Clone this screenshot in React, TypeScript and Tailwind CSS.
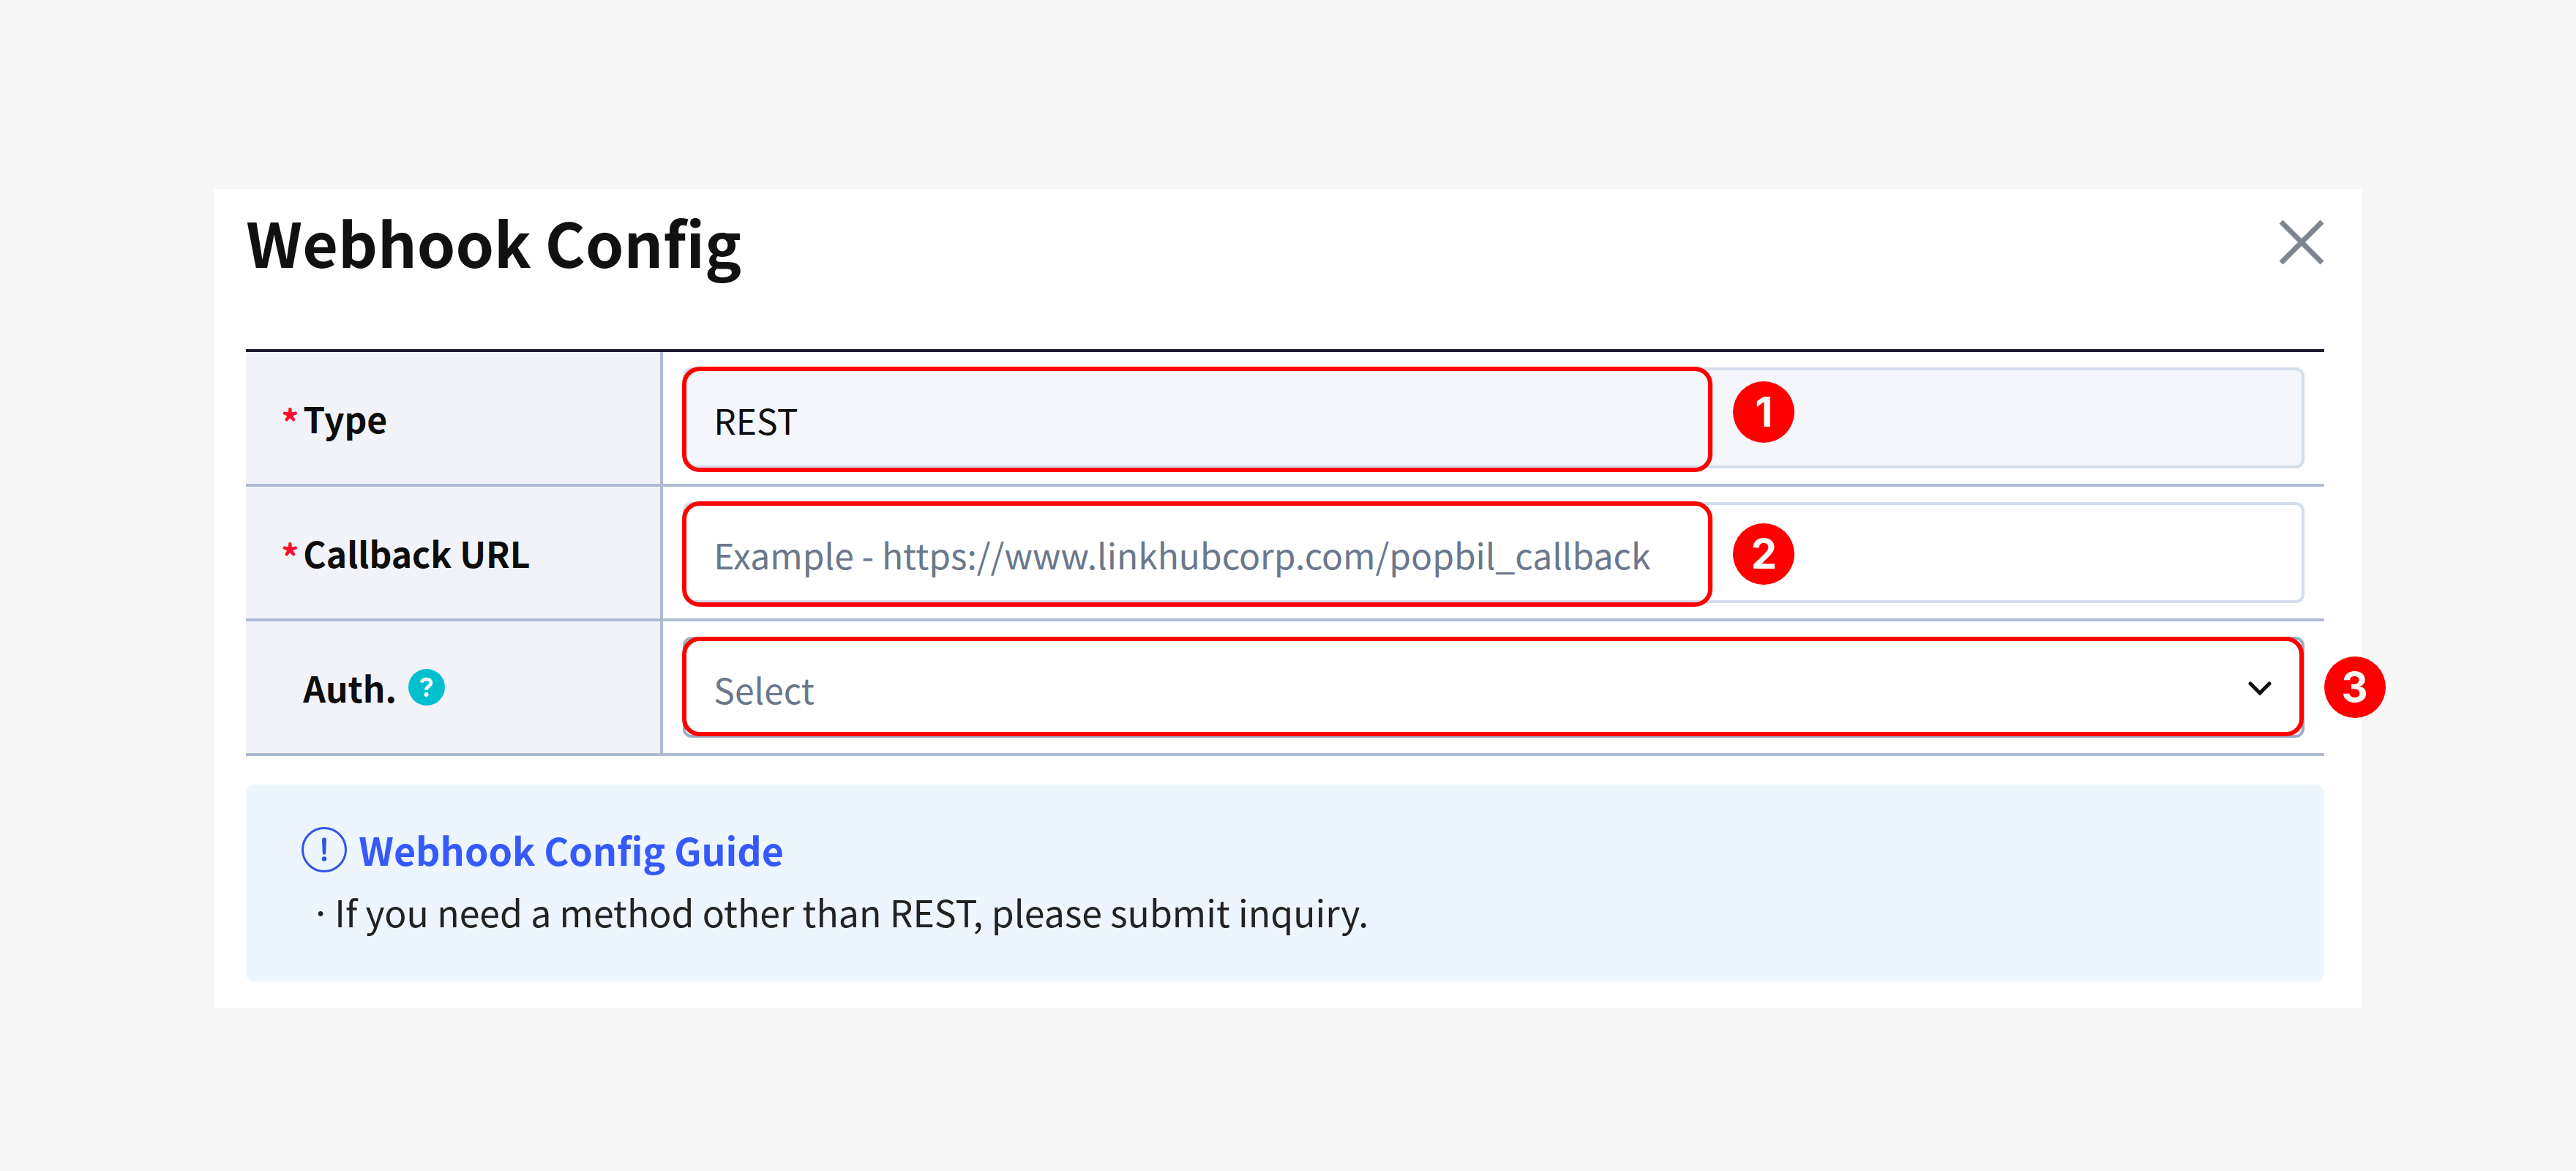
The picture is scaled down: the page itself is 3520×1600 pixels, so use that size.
import React, { useState } from 'react';
import clsx from 'clsx';

interface CalloutProps {
  step: number;
  className: string;
  badgeClassName: string;
}

// Red outline with a numbered badge to its right
const Callout: React.FC<CalloutProps> = ({ step, className, badgeClassName }) => (
  <div className={clsx('absolute -left-px border-6 border-[#ff0000] rounded-3xl pointer-events-none', className)}>
    <span
      className={clsx(
        'absolute left-full ml-[34px] size-21 rounded-full bg-[#ff0000] text-[#fafafa] flex items-center justify-center font-[Inter,sans-serif] font-bold text-[56px] leading-none',
        badgeClassName
      )}
    >
      {step}
    </span>
  </div>
);

interface RowProps {
  id: string;
  label: string;
  required?: boolean;
  help?: boolean;
  children: React.ReactNode;
}

const Row: React.FC<RowProps> = ({ id, label, required, help, children }) => (
  <tr>
    <th
      scope="row"
      className="w-[570px] bg-[#f2f3f8] border-b-4 border-r-4 border-[#aebbd2] pl-12 text-left font-bold align-middle"
    >
      <div className="flex items-center">
        <span aria-hidden="true" className="w-[30px] pt-2 text-[#ff0a2f]">
          {required && '*'}
        </span>
        <label htmlFor={id} className="text-[#0d0d0d]">
          {label}
        </label>
        {help && (
          <button type="button" aria-label="Auth. help" className="ml-4 size-[50px] cursor-pointer">
            <svg viewBox="0 0 50 50" className="size-full" fill="none">
              <circle cx="25" cy="25" r="25" fill="#00bfcf" />
              <path
                d="M18 18.500c1-3.300 3.400-4.500 6.500-4.500 4 0 6.500 2 6.500 5 0 4.500-6.500 4.800-6.500 10"
                stroke="#fff"
                strokeWidth="4.500"
              />
              <circle cx="24.500" cy="35" r="3" fill="#fff" />
            </svg>
          </button>
        )}
      </div>
    </th>
    <td className="border-b-4 border-[#aebbd2] px-[27px] py-[21px]">
      <div className="relative">{children}</div>
    </td>
  </tr>
);

export default function App() {
  const [url, setUrl] = useState('');
  const [auth, setAuth] = useState('');

  return (
    <div className="min-h-screen bg-[#f7f7f7] pt-[258px] pb-56 font-['Noto_Sans_CJK_KR',sans-serif] text-[48px] leading-[72px]">
      <main className="w-5/6 mx-auto bg-white pl-[43px] pr-[51px] pb-9">
        <header className="h-[219px] pt-[42px] flex items-start justify-between">
          <h1 className="text-[84px] leading-[60px] font-bold text-[#111]">Webhook Config</h1>
          <button type="button" aria-label="Close" className="cursor-pointer">
            <svg viewBox="0 0 62 62" className="size-[62px]" stroke="#80868f" strokeWidth="7">
              <path d="M3 3l56 56M59 3L3 59" />
            </svg>
          </button>
        </header>

        <table className="w-full border-separate border-spacing-0 border-t-4 border-[#1c1d2c]">
          <tbody>
            <Row id="type" label="Type" required>
              <input
                id="type"
                readOnly
                value="REST"
                className="block w-full h-[138px] px-[38px] pt-1 rounded-xl border-4 border-[#d3ddeb] bg-[#f5f6fb] text-[#0d0d0d] outline-none"
              />
              <Callout step={1} className="-top-px h-36 w-[1408px]" badgeClassName="top-[14px]" />
            </Row>
            <Row id="callback" label="Callback URL" required>
              <input
                id="callback"
                type="text"
                value={url}
                onChange={(e) => setUrl(e.target.value)}
                placeholder="Example - https://www.linkhubcorp.com/popbil_callback"
                className="block w-full h-[138px] px-[38px] pt-1 rounded-xl border-4 border-[#d3ddeb] bg-white placeholder:text-[#6b778b] outline-none"
              />
              <Callout step={2} className="-top-px h-36 w-[1408px]" badgeClassName="top-6" />
            </Row>
            <Row id="auth" label="Auth." help>
              <select
                id="auth"
                value={auth}
                onChange={(e) => setAuth(e.target.value)}
                className="block w-full h-[138px] px-[38px] pt-1 rounded-xl border-4 border-[#9dacc4] bg-white text-[#6b778b] appearance-none outline-none"
              >
                <option value="">Select</option>
              </select>
              <svg
                viewBox="0 0 32 20"
                className="absolute right-[45px] top-[61px] w-8 h-5 pointer-events-none"
                fill="none"
                stroke="#0d0d0d"
                strokeWidth="5"
                strokeLinecap="round"
              >
                <path d="M3 3l13 13L29 3" />
              </svg>
              <Callout step={3} className="top-0 right-px h-[136px]" badgeClassName="top-[21px]" />
            </Row>
          </tbody>
        </table>

        <section className="mt-[39px] rounded-xl bg-[#edf5ff] pl-[76px] pt-[47px] pb-[54px]">
          <h2 className="flex items-center gap-4 text-[52px] leading-[84px] font-bold text-[#3559fa]">
            <svg viewBox="0 0 62 62" className="size-[62px]" fill="none">
              <circle cx="31" cy="31" r="29.500" stroke="#3353e4" strokeWidth="3" />
              <path d="M28 17.500a3 3 0 0 1 6 0l-.8 18a2.200 2.200 0 0 1-4.400 0z" fill="#3353e4" />
              <circle cx="31" cy="43.500" r="3.200" fill="#3353e4" />
            </svg>
            Webhook Config Guide
          </h2>
          <ul className="text-[50px] leading-[84px] text-[#222]">
            <li className="flex">
              <span className="w-[45px] pl-3">·</span>
              If you need a method other than REST, please submit inquiry.
            </li>
          </ul>
        </section>
      </main>
    </div>
  );
}
